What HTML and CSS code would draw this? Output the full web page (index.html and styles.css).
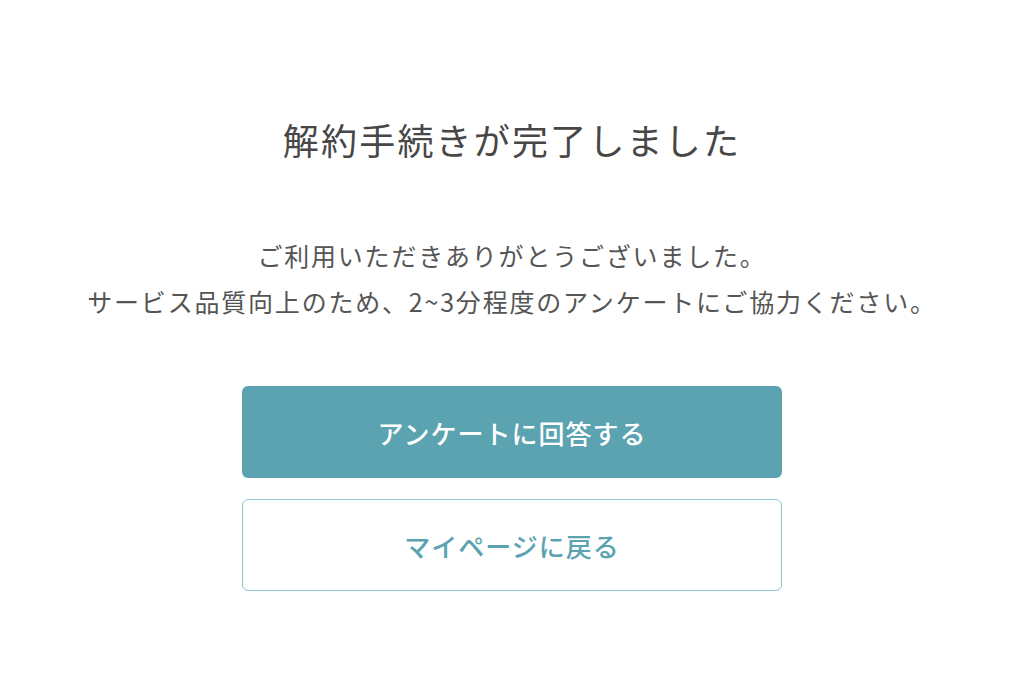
FILE: index.html
```html
<!DOCTYPE html>
<html lang="ja">
<head>
<meta charset="utf-8">
<title>解約手続きが完了しました</title>
<link rel="stylesheet" href="styles.css">
</head>
<body>
<main class="page">
  <h1 class="title">解約手続きが完了しました</h1>
  <div class="message">
    <p>ご利用いただきありがとうございました。</p>
    <p>サービス品質向上のため、2~3分程度のアンケートにご協力ください。</p>
  </div>
  <div class="actions">
    <a class="btn btn-primary" href="#">アンケートに回答する</a>
    <a class="btn btn-secondary" href="#">マイページに戻る</a>
  </div>
</main>
</body>
</html>
```
FILE: styles.css
```css
html, body {
  margin: 0;
  padding: 0;
  background: #ffffff;
}
body {
  font-family: "Noto Sans CJK JP", "Noto Sans", sans-serif;
  color: #4a4a4a;
}
.page {
  display: flex;
  flex-direction: column;
  align-items: center;
  padding-top: 112px;
}
.title {
  margin: 0;
  font-size: 36px;
  line-height: 54px;
  font-weight: 400;
  letter-spacing: 2.2px;
  color: #474747;
}
.message {
  margin-top: 66px;
  text-align: center;
  font-size: 25px;
  line-height: 46px;
  letter-spacing: 1.8px;
  color: #555555;
}
.message p {
  margin: 0;
}
.actions {
  margin-top: 62px;
  display: flex;
  flex-direction: column;
  gap: 21px;
}
.btn {
  box-sizing: border-box;
  width: 540px;
  height: 92px;
  display: flex;
  align-items: center;
  justify-content: center;
  border-radius: 6px;
  text-decoration: none;
  font-size: 26px;
  font-weight: 500;
  letter-spacing: 1px;
}
.btn-primary {
  background: #5ba3b1;
  color: #ffffff;
}
.btn-secondary {
  background: #ffffff;
  color: #5ba3b1;
  border: 1.5px solid #8fc4ce;
}
```
